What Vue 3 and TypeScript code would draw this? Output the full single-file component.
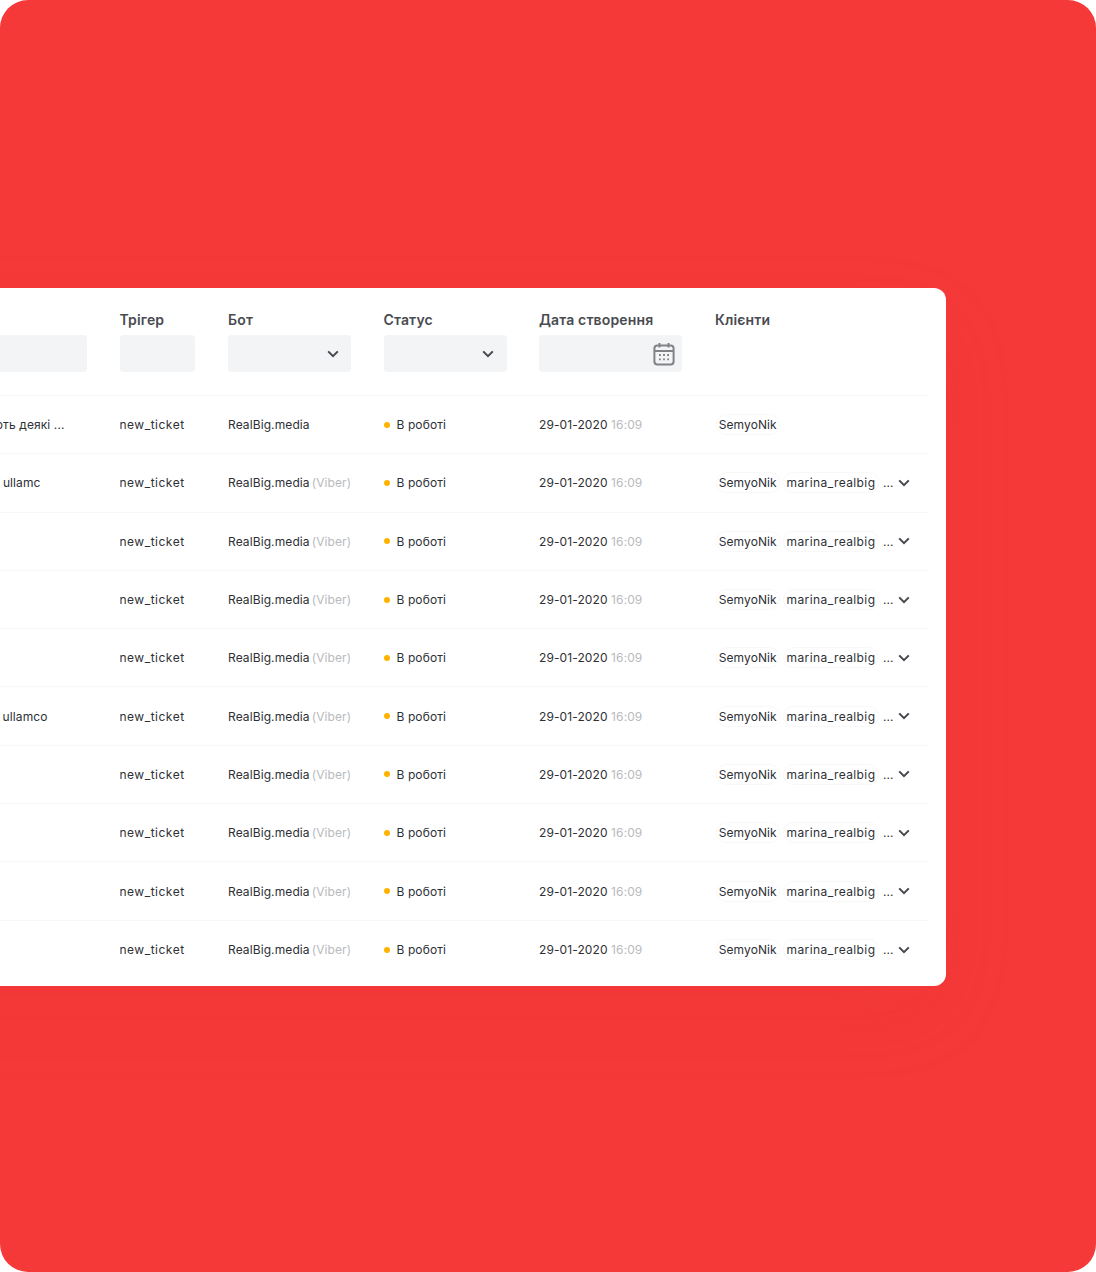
<template>
  <div class="page">
    <div class="card">
      <div class="row head">
        <div class="cell"><div class="label">&nbsp;</div><div class="field subject"></div></div>
        <div class="cell"><div class="label">Трігер</div><div class="field trigger"></div></div>
        <div class="cell">
          <div class="label">Бот</div>
          <div class="field select">
            <svg class="chev" width="12" height="8" viewBox="0 0 12 8"><path d="M1.2 1.4 6 6.2l4.8-4.8" /></svg>
          </div>
        </div>
        <div class="cell">
          <div class="label">Статус</div>
          <div class="field select">
            <svg class="chev" width="12" height="8" viewBox="0 0 12 8"><path d="M1.2 1.4 6 6.2l4.8-4.8" /></svg>
          </div>
        </div>
        <div class="cell">
          <div class="label">Дата створення</div>
          <div class="field date">
            <svg class="cal" width="22" height="24" viewBox="0 0 22 24">
              <rect x="1.4" y="3.4" width="19.2" height="19.2" rx="3" />
              <path d="M1.4 9h19.2M6.5 1v4.6M15.5 1v4.6" />
              <path class="dots" d="M6 13h1.8M10.1 13h1.8M14.2 13h1.8M6 17.4h1.8M10.1 17.4h1.8M14.2 17.4h1.8" />
            </svg>
          </div>
        </div>
        <div class="cell"><div class="label">Клієнти</div></div>
      </div>

      <div v-for="(r, i) in rows" :key="i" class="row item">
        <div class="cell subject-text"><span :style="{ marginRight: r.gap + 'px' }">{{ r.subject }}</span></div>
        <div class="cell wide">new_ticket</div>
        <div class="cell">RealBig.media <span v-if="r.viber" class="muted viber">(Viber)</span></div>
        <div class="cell status"><i class="dot"></i>В роботі</div>
        <div class="cell">29-01-2020 <span class="muted">16:09</span></div>
        <div class="cell clients">
          <span class="chip first">SemyoNik</span>
          <template v-if="r.viber">
            <span class="chip second">marina_realbig</span>
            <span class="more">...</span>
            <svg class="chev" width="12" height="8" viewBox="0 0 12 8"><path d="M1.2 1.4 6 6.2l4.8-4.8" /></svg>
          </template>
        </div>
      </div>
    </div>
  </div>
</template>

<script setup lang="ts">
interface Row {
  subject: string
  gap: number
  viber: boolean
}

const rows: Row[] = [
  { subject: 'Вони колоть деякі ...', gap: 55, viber: false },
  { subject: 'Ut enim ad minim, quis nostrud ullamc', gap: 79, viber: true },
  { subject: '', gap: 0, viber: true },
  { subject: '', gap: 0, viber: true },
  { subject: '', gap: 0, viber: true },
  { subject: 'Ut enim ad minim, quis nostrud ullamco', gap: 72, viber: true },
  { subject: '', gap: 0, viber: true },
  { subject: '', gap: 0, viber: true },
  { subject: '', gap: 0, viber: true },
  { subject: '', gap: 0, viber: true },
]
</script>

<style>
html,
body {
  margin: 0;
  background: #fff;
}
</style>

<style scoped>
.page {
  width: 1096px;
  height: 1272px;
  box-sizing: border-box;
  padding-top: 288px;
  background: #f53939;
  border-radius: 28px;
  overflow: hidden;
  font-family: Inter, "Noto Sans", sans-serif;
  color: #2e3035;
}

.card {
  width: 1146px;
  height: 698px;
  margin-left: -200px;
  box-sizing: border-box;
  padding-right: 18px;
  background: #fff;
  border-radius: 12px;
  box-shadow: 0 30px 90px rgba(190, 30, 30, 0.05);
}

.row {
  display: grid;
  grid-template-columns: 319.5px 108.5px 155.5px 155.5px 176px 1fr;
  border-bottom: 1px solid #f8f8f9;
  box-sizing: border-box;
}

.head {
  height: 108px;
  padding-top: 23px;
}

.item {
  height: 58.3px;
  align-items: center;
  font-size: 12px;
  letter-spacing: 0.1px;
}

.item:last-child {
  border-bottom: none;
}

.label {
  height: 24px;
  font-size: 14px;
  line-height: 17px;
  font-weight: 600;
  letter-spacing: 0.15px;
  color: #494b50;
}

.field {
  height: 37px;
  box-sizing: border-box;
  background: #f3f4f6;
  border-radius: 4px;
}

.subject {
  width: 287px;
}

.trigger {
  width: 75.5px;
}

.select {
  width: 123px;
  display: flex;
  align-items: center;
  justify-content: flex-end;
  padding-right: 12.5px;
}

.date {
  width: 143px;
  display: flex;
  align-items: center;
  justify-content: flex-end;
  padding-right: 7px;
}

.chev {
  fill: none;
  stroke: #45474c;
  stroke-width: 2;
}

.cal {
  fill: none;
  stroke: #808286;
  stroke-width: 2;
}

.cal .dots {
  stroke-width: 1.8;
}

.subject-text {
  white-space: nowrap;
  text-align: right;
}

.wide {
  letter-spacing: 0.5px;
}

.status {
  display: flex;
  align-items: center;
}

.dot {
  width: 6px;
  height: 6px;
  margin-right: 7px;
  border-radius: 50%;
  background: #ffb300;
}

.muted {
  color: #b9babd;
}

.viber {
  margin-left: -1.5px;
}

.clients {
  display: flex;
  align-items: center;
}

.chip {
  height: 21px;
  box-sizing: border-box;
  margin-right: 3px;
  line-height: 20px;
  text-align: center;
  border: 1px solid #f8f8f9;
  border-radius: 11px;
  white-space: nowrap;
}

.first {
  width: 64.5px;
  margin-left: 0.5px;
}

.second {
  width: 96px;
  letter-spacing: 0.4px;
}

.more {
  margin: 0 5px 0 1px;
  letter-spacing: 0;
}
</style>
